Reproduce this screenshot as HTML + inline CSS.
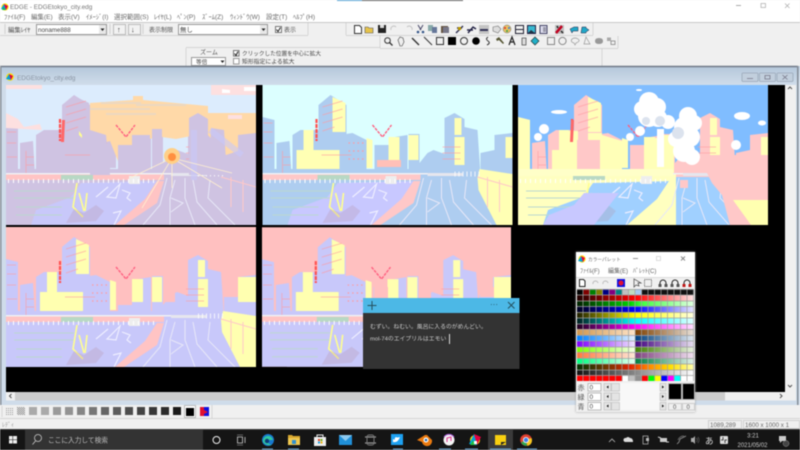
<!DOCTYPE html>
<html lang="ja"><head><meta charset="utf-8"><title>EDGE</title>
<style>
html,body{margin:0;padding:0;width:800px;height:450px;overflow:hidden;background:#f0f0f0}
#w{position:absolute;left:0;top:0;width:800px;height:450px;overflow:hidden;filter:blur(.42px)}
svg{position:absolute;left:0;top:0}
svg svg{position:static}
text{font-family:"Liberation Sans","Noto Sans CJK JP",sans-serif;font-size:7.5px;fill:#555}
.m text{font-size:6.5px;fill:#6a6a6a}
.pal{position:absolute;left:576px;top:252px;width:119px;height:160px;background:#f0f0f0;box-shadow:0 0 2px #999}
.r{position:absolute;left:1px;width:117px;height:5.75px}
.grid{position:absolute;left:1px;top:37px;width:117px;height:92px;background:repeating-linear-gradient(90deg,transparent 0 5.5px,rgba(160,160,160,.75) 5.5px 6.5px),repeating-linear-gradient(0deg,transparent 0 4.75px,rgba(160,160,160,.75) 4.75px 5.75px)}
</style></head><body><div id="w">
<svg width="800" height="450" viewBox="0 0 800 450">
<defs>
<linearGradient id="tb" x1="0" y1="0" x2="0" y2="1"><stop offset="0" stop-color="#b4c7da"/><stop offset="1" stop-color="#cfdcea"/></linearGradient>
<pattern id="p1" width="2" height="2" patternUnits="userSpaceOnUse"><rect width="1" height="1" fill="#999"/></pattern>
<pattern id="p2" width="2" height="2" patternUnits="userSpaceOnUse"><rect width="1" height="1" fill="#888"/><rect x="1" y="1" width="1" height="1" fill="#888"/></pattern>
<symbol id="scene" viewBox="0 0 250 140">
<rect width="250" height="140" style="fill:var(--sky)"/>
<g style="fill:var(--b)">
<path d="M0 32l12 3v55H0zM14 58l13-2 2 34H14zM30 50l8-5h22v45H30zM56 20l12-10 16 10v70H56zM77 50l13-2 14 7v35H77zM112 60h18v30h-18zM126 53l19-3v40h-19zM146 49h11v41h-11zM157 78l8-10 6-3 11 4v21h-25zM182 33l10-5 10 6v8l13 3 3 45h-36zM218 68l14-3v-15l18-2v42h-32z"/>
<rect y="84" width="250" height="8"/>
</g>
<g style="fill:var(--l)">
<path d="M70 12l13 6v29H70zM41 45h10v20l26 0v19H34V65h7zM104 53l6 2v28h-6zM126 52h11v23h-11zM146 50h10v25h-10zM192 33h7v17h-7zM192 52h10v28h-10zM243 52h7v21h-7z"/>
</g>
<rect x="0" y="92" width="250" height="48" style="fill:var(--g)"/>
<path d="M25 140l5-15 35-13 10-14 81-2-40 44z" style="fill:var(--a)"/>
<path d="M158 92h90v48H158z" style="fill:var(--r)"/>
<path d="M217 84l33 5v51h-16l-18-35-1-12z" style="fill:var(--l)"/>
<path d="M215 92l35 10M225 92v30M237 95v32" stroke="#ffc8c8" fill="none" stroke-width="1"/>
<path d="M151 96h7l-7 22-33 22h-9l30-26z" style="fill:var(--s)"/>
<rect y="88" width="158" height="7" style="fill:var(--s)"/>
<rect y="88" width="165" height="1.500" fill="#f0f0f4"/>
<rect x="165" y="88" width="35" height="3" fill="#e6e6ee"/>
<rect x="55" y="90" width="32" height="5" fill="#b8d8c4"/>
<rect x="123" y="91" width="11" height="8" fill="#eee"/>
<path d="M2 96h150" stroke="#fff" stroke-width="4" stroke-dasharray="1 4" fill="none"/>
<path d="M192 89h26" stroke="#fff" stroke-width="5" stroke-dasharray="1 3" fill="none" opacity=".8"/>
<path d="M161 93l-7 27-17 20M169 95l-5 18v27M179 93v20l10 27M187 95l4 22 20 23M204 95l-2 18 27 27M165 113l12 5-12 9" fill="none" stroke="#e8e8f8" stroke-width="1"/>
<path d="M101 112l13-13-4 14zM116 105l8 3-3 5 4 3M107 128l8-2-3 6-4 8M90 112l12-10" fill="none" stroke="#eef" stroke-width="1.200"/>
<path d="M8 106h60M8 113h60M10 122h46M10 130h46" stroke="#bcd8d0" stroke-width="1" fill="none"/>
<path d="M71 98l-4 24 10 10M73 108l5 18M81 108l-2 18" stroke="#ffff90" stroke-width="1.600" fill="none"/>
<path d="M60 138l8-14 10 4 12-8 8 6-8 10z" fill="#b48ca0" opacity=".25"/>
<path d="M110 40l10 12 9-12" stroke="#ff6080" stroke-width="1.400" fill="none" stroke-dasharray="3 1"/>
<path d="M54 34v22" stroke="#ff5050" stroke-width="2.200" fill="none" stroke-dasharray="4 1"/>
<path d="M60 22l20-6M60 30l20-6M60 38l20-6M60 46l12-4M1 38h9M1 47h9M1 58h9M1 72h10M59 70h30M180 62h18M180 68h18M180 74h18M20 66v22M20 72h8M20 80h8" stroke="#ff9aa0" stroke-width="1" fill="none" opacity=".6"/>
<path d="M86 58h16M86 66h16M86 74h16" stroke="#ff9aa0" stroke-width="1.200" stroke-dasharray="1.500 3" fill="none"/>
</symbol>
</defs>

<!-- title -->
<rect width="800" height="23" fill="#fff"/>
<rect x="337" width="25" height="1" fill="#5aa7d8"/><rect x="362" width="101" height="1" fill="#666"/>
<g><circle cx="5" cy="7" r="3.600" fill="#ffe000"/><path d="M1 9l3-5 2 6z" fill="#00a0e0"/><path d="M4 4l4 2-2 4z" fill="#e00040"/><path d="M2 10l3 0-1-3z" fill="#20c040"/></g>
<text x="10" y="9" style="font-size:6.400px;fill:#777">EDGE - EDGEtokyo_city.edg</text>
<path d="M736 5.500h5" stroke="#aaa"/><rect x="761" y="3.500" width="4.500" height="4" fill="none" stroke="#aaa" stroke-width=".7"/><path d="M785 3.500l4.500 4.500m0-4.500l-4.500 4.500" stroke="#aaa" stroke-width=".7"/>
<g class="m"><text x="4" y="19">ﾌｧｲﾙ(F)</text><text x="31" y="19">編集(E)</text><text x="58" y="19">表示(V)</text><text x="86" y="19">ｲﾒｰｼﾞ(I)</text><text x="114" y="19">選択範囲(S)</text><text x="154" y="19">ﾚｲﾔ(L)</text><text x="177" y="19">ﾍﾟﾝ(P)</text><text x="202" y="19">ｽﾞｰﾑ(Z)</text><text x="230" y="19">ｳｨﾝﾄﾞｳ(W)</text><text x="266" y="19">設定(T)</text><text x="293" y="19">ﾍﾙﾌﾟ(H)</text></g>

<!-- toolbars -->
<rect y="22" width="800" height="45" fill="#f0f0f0"/><path d="M0 22.500h800" stroke="#c8c8c8"/>
<path d="M0 35.500h308M308 23v12M346 23v12M346 35.500h247M593 23v12M380 36v12M380 48.500h238M618 36v12M186 47.500h194M186 48v18M602 48v18" stroke="#d4d4d4" fill="none"/>
<path d="M5 24v10M143 24v10M110 24v10" stroke="#d0d0d0"/>
<text x="8" y="32" style="font-size:6.400px">編集ﾚｲﾔ</text>
<rect x="36.500" y="24.500" width="70" height="10" fill="#fff" stroke="#999"/><text x="38" y="32" style="font-size:6.200px;fill:#444">noname888</text>
<rect x="99" y="25" width="7" height="9" fill="#e8e8e8"/><path d="M100.500 28.500h4l-2 2.500z" fill="#222"/>
<rect x="113.500" y="24.500" width="12" height="10" fill="#f2f2f2" stroke="#bbb"/><text x="117" y="32" style="fill:#444">↑</text>
<rect x="128.500" y="24.500" width="12" height="10" fill="#f2f2f2" stroke="#bbb"/><text x="131" y="32" style="fill:#444">↓</text>
<text x="149" y="32" style="font-size:6px">表示制限</text>
<rect x="178.500" y="24.500" width="89" height="10" fill="#fff" stroke="#999"/><text x="180" y="32" style="font-size:6.400px;fill:#444">無し</text>
<rect x="260" y="25" width="7" height="9" fill="#e8e8e8"/><path d="M261.500 28.500h4l-2 2.500z" fill="#222"/>
<rect x="275.500" y="26.500" width="6" height="6" fill="#fff" stroke="#777"/><path d="M276.500 29.500l1.500 2 2.500-4" stroke="#222" fill="none"/><text x="284" y="32" style="font-size:6px">表示</text>

<g class="i">
<path d="M354.500 25.500h5l2 2v6h-7z" fill="#fff" stroke="#333"/>
<path d="M365 27h3l1 1h4v5h-8z" fill="#e6c34a" stroke="#555" stroke-width=".6"/>
<rect x="378" y="25" width="8" height="8" fill="#222"/><rect x="380" y="25" width="4" height="3" fill="#ddd"/>
<path d="M391 30a3 3 0 0 1 5-3M407 27a3 3 0 0 1 5 3" stroke="#c4c4c4" fill="none"/>
<path d="M418 25l3 5M423 25l-3 5" stroke="#446"/><circle cx="418" cy="32" r="1.300" fill="#358"/><circle cx="423" cy="32" r="1.300" fill="#358"/>
<rect x="428" y="25" width="5" height="6" fill="#8aa"/><rect x="432" y="27" width="5" height="6" fill="#679"/>
<rect x="441" y="26" width="7" height="7" fill="#654"/><rect x="443" y="27" width="6" height="6" fill="#778"/>
<path d="M456 33l7-7M457 28h5" stroke="#335" stroke-width="1.500"/><rect x="458" y="27" width="3" height="3" fill="#b90"/>
<path d="M468 33l5-6 3 2M467 30h6" stroke="#224" stroke-width="1.400" fill="none"/>
<rect x="479" y="25" width="10" height="9" fill="#c4c4c4"/><rect x="480" y="29" width="8" height="2" fill="#335"/>
<path d="M493 27l5-1 3 3-3 4-5-2z" fill="#ddd" stroke="#777" stroke-width=".6"/>
<circle cx="507" cy="29" r="4" fill="#e8c060" stroke="#777" stroke-width=".5"/><circle cx="505" cy="28" r="1" fill="#e03030"/><circle cx="509" cy="28" r="1" fill="#3080e0"/><circle cx="507" cy="31" r="1" fill="#30a050"/>
<path d="M515.500 25.500h8v8h-8zM515.500 29.500h8" stroke="#223" fill="none"/>
<rect x="527.500" y="25.500" width="8" height="8" fill="#38b8d0" stroke="#224"/><path d="M528 33l3-3 4 3z" fill="#234"/>
<rect x="540" y="25.500" width="7" height="8" fill="#dde" stroke="#446"/><rect x="543" y="27" width="3" height="5" fill="#99a"/>
<rect x="555" y="25" width="9" height="9" fill="#c0c0c0"/><path d="M556 33l6-7" stroke="#c00020" stroke-width="2.500"/><path d="M557 26l1 2M561 31l2 2" stroke="#222" stroke-width="1.500"/>
<path d="M570 29l4-2h4v4h-5l-1 2z" fill="#20a8c8" stroke="#224" stroke-width=".5"/><path d="M582 27h4v1l3 2-3 2v1h-5z" fill="#20a8c8" stroke="#224" stroke-width=".5"/>

<circle cx="387.500" cy="40.500" r="2.800" fill="none" stroke="#333"/><path d="M389.500 42.500l3 3" stroke="#333" stroke-width="1.300"/>
<path d="M398 40l2-3 3 1 1 4-2 4h-2z" fill="#eee" stroke="#444" stroke-width=".6"/>
<path d="M412 38l7 7" stroke="#333" stroke-width="1.400"/><path d="M424 37l8 8" stroke="#333"/>
<rect x="436.500" y="37.500" width="7" height="7" fill="none" stroke="#333"/><rect x="448" y="37" width="8" height="8" fill="#000"/>
<circle cx="464" cy="41" r="3.500" fill="none" stroke="#333"/><circle cx="476" cy="41" r="3.800" fill="#000"/>
<path d="M488 37q-3 2 0 4t-1 4" fill="none" stroke="#333"/>
<path d="M496 39l3-2 5 6-1 1-4-4-2 1z" fill="#553"/>
<path d="M509 45l3-8 3 8M510 42h4" stroke="#222" stroke-width="1.200" fill="none"/>
<rect x="522" y="38" width="4" height="7" fill="#ddd" stroke="#444" stroke-width=".7"/>
<path d="M535 37l4 4-4 4-4-4z" fill="#20b0c8" stroke="#233" stroke-width=".7"/>
<rect x="547.500" y="37.500" width="7" height="7" fill="none" stroke="#888"/><circle cx="562.500" cy="41" r="3.600" fill="none" stroke="#888"/>
<path d="M572 39q3-2 6 0t-2 4l-1 2-1-2q-4-1-2-4z" fill="none" stroke="#999" stroke-width=".7"/>
<path d="M584 44l2-7 4 7z" fill="none" stroke="#999" stroke-width=".7"/>
<path d="M595 41q0-3 4-3t4 3-4 3-4-3z" fill="#999"/>
<rect x="607" y="37.500" width="4" height="3.500" fill="#aaa"/><rect x="611" y="41" width="4" height="3.500" fill="none" stroke="#777" stroke-width=".7"/>
</g>

<text x="200" y="54.500" style="font-size:6px">ズーム</text>
<rect x="191.500" y="57.500" width="34" height="8" fill="#fff" stroke="#999"/><text x="196" y="64" style="font-size:5.600px;fill:#444">等倍</text><path d="M220.500 60.500h4l-2 2.500z" fill="#222"/>
<rect x="233.500" y="50.500" width="5.500" height="5.500" fill="#fff" stroke="#777"/><path d="M234.500 53.500l1.500 2 2-4" stroke="#222" fill="none"/>
<text x="242" y="55.500" style="font-size:5.650px;fill:#444">クリックした位置を中心に拡大</text>
<rect x="233.500" y="58.500" width="5.500" height="5.500" fill="#fff" stroke="#999"/>
<text x="242" y="63.500" style="font-size:5.850px;fill:#444">矩形指定による拡大</text>

<!-- MDI window -->
<rect x="0" y="66" width="800" height="339" fill="#cfdcea"/>
<rect x="0" y="66" width="800" height="18" fill="url(#tb)"/>
<path d="M0 66.500h798" stroke="#707a88" stroke-width="1.400"/>
<rect x="0" y="66" width="1.500" height="340" fill="#868e98"/><rect x="797" y="66" width="1.500" height="340" fill="#868e98"/>
<circle cx="10" cy="77" r="3.800" fill="#ffe000"/><path d="M6 79l3-5 2 6z" fill="#00a0e0"/><path d="M9 74l4 2-2 4z" fill="#e00040"/>
<text x="17" y="80" style="font-size:6.400px;fill:#8a95a3">EDGEtokyo_city.edg</text>
<g fill="#c2cfdd" stroke="#9aa8b8" stroke-width=".8"><rect x="742" y="73" width="16" height="8.500" rx="1"/><rect x="759.500" y="73" width="16" height="8.500" rx="1"/><rect x="777" y="73" width="16" height="8.500" rx="1"/></g>
<path d="M747 78.500h6M765 75.500h5v3.500h-5zM782.500 75l5 4.500m0-4.500l-5 4.500" stroke="#778" fill="none" stroke-width=".8"/>
<rect x="6" y="85" width="779" height="307" fill="#000"/>
<rect x="785" y="85" width="11" height="307" fill="#f0f0f0"/><path d="M788 89l2-2 2 2M788 385l2 2 2-2" stroke="#555" fill="none"/>
<rect x="6" y="392" width="790" height="8.500" fill="#f0f0f0"/><rect x="15" y="392" width="710" height="8.500" fill="#cdcdcd"/><path d="M11.500 394l-2 2 2 2M780 394l2 2-2 2" stroke="#555" fill="none"/>

<svg x="6" y="85" width="250" height="140" style="--sky:#dcecfd;--b:#cfc3e2;--l:#cfc3e2;--g:#cfc3e2;--a:#c8c8fa;--r:#cfc3e2;--s:#ffc4c4">
<use href="#scene"/>
<path d="M84 18l43-3v-4h10v4l65 6v7h48v32l-30 10-20-22-30 6-14-2-14 2v20l-30 2-8-20-20 6z" fill="#ffd9a8"/>
<path d="M84 24h60M100 29h50M130 20h50M95 18h40" stroke="#ecd8c0" stroke-width="2" fill="none"/>
<path d="M146 44l10 0v24h-10zM126 50h18v30h-18zM112 60h14v25h-14zM183 33l9-5 10 6v56h-19zM205 43l13 2 3 45h-18zM232 50l18-2v42h-18zM100 50l-16-5v45h20z" fill="#cfc3e2"/>
<path d="M188 45v50M204 45l32 25" stroke="#c8c8fa" stroke-width="6" fill="none" opacity=".6"/>
<path d="M166 73l-42 20M166 73l50 30M166 73l60 15M166 73v30M166 73l-30 50" stroke="#fff0d0" stroke-width=".8" fill="none"/>
<path d="M0 0h36v4H0zM205 0h45v10h-45zM0 28l12 6 6 8 16-3 2 6-36-2zM222 30h14v4h-14z" fill="#fde0e0"/>
<path d="M216 4l8 1v3h-8zM238 2h12v4h-12z" fill="#fff"/>
<path d="M56 35h3l-1 22h-3z" fill="#ff6868"/>
<path d="M73 46l3 4 0 3-3-3z" fill="#ffff90"/>
<path d="M110 40l10 12 9-12" stroke="#ff6080" stroke-width="1.400" fill="none" stroke-dasharray="3 1"/>
<circle cx="166" cy="71" r="8" fill="#ffd088"/><circle cx="166" cy="72" r="4" fill="#ff9040"/>
</svg>

<svg x="262" y="85" width="251" height="140" style="--sky:#dcffff;--b:#aecdf0;--l:#ffffb4;--g:#aecdf0;--a:#c8c8ff;--r:#aecdf0;--s:#ffc8c8">
<use href="#scene"/><rect x="115" y="75" width="24" height="7" fill="#ffc0b8"/>
</svg>

<svg x="518" y="85" width="250" height="140" style="--sky:#80bdff;--b:#ffc8c8;--l:#ffffb8;--g:#ffffc0;--a:#a0d0ff;--r:#a0d0ff;--s:#ffffc0">
<use href="#scene"/>
<path d="M25 140l6-10 25-10 10-12 35 0-25 32z" fill="#c8c8ff"/>
<path d="M0 32l12 3v55H0zM43 46h17v44H43zM70 48h14v42H70zM84 50l20 6v34H84zM126 53h30v35h-30z" fill="#ffffb8"/>
<path d="M59 55h23v30H59z" fill="#ffc8c8"/>
<path d="M180 70h70v70h-38l-8-30-10-12z" fill="#ffc8c8"/><path d="M215 115l35 0v25h-17z" fill="#ffffb0"/>
<path d="M112 60h14v25h-14z" fill="#ffc8c8"/>
<rect x="0" y="84" width="155" height="7" fill="#ffffc8"/>
<g fill="#fff"><circle cx="131" cy="17" r="10"/><circle cx="124" cy="24" r="8"/><circle cx="139" cy="22" r="9"/><circle cx="131" cy="31" r="11"/><circle cx="140" cy="33" r="9"/><circle cx="150" cy="37" r="7"/><circle cx="170" cy="31" r="9"/><circle cx="176" cy="38" r="8"/><circle cx="166" cy="42" r="10"/><circle cx="172" cy="52" r="10"/><circle cx="166" cy="66" r="11"/><circle cx="174" cy="72" r="8"/><circle cx="158" cy="54" r="8"/><circle cx="122" cy="46" r="5"/><circle cx="112" cy="52" r="4"/><circle cx="26" cy="44" r="5"/><circle cx="20" cy="52" r="4"/><ellipse cx="41" cy="27" rx="8" ry="2"/><ellipse cx="224" cy="31" rx="8" ry="4"/><ellipse cx="244" cy="38" rx="4" ry="2.500"/><ellipse cx="121" cy="5" rx="3" ry="1"/><circle cx="218" cy="60" r="5"/><rect x="139" y="44" width="7" height="38"/></g>
<g fill="#dce3ee"><circle cx="142" cy="36" r="5"/><circle cx="160" cy="48" r="6"/><circle cx="128" cy="36" r="4"/></g>
<path d="M162 95h8v8h-8z" fill="#ffc8c8"/><path d="M53 35h3l-1 22h-3z" fill="#ff6868"/>
</svg>

<svg x="6" y="227" width="250" height="140" style="--sky:#ffc0c0;--b:#c8c8fa;--l:#ffffb0;--g:#c8c8fa;--a:#c8c8fa;--r:#c8c8fa;--s:#ffc4c4">
<use href="#scene"/><path d="M112 60h14v18h-14zM157 60h12v15h-12z" fill="#ffc0c0"/><path d="M218 60h14v10h-14z" fill="#ffc0c0"/><path d="M232 50h18v25h-18z" fill="#ffffb0"/>
</svg>

<svg x="262" y="227" width="249" height="140" style="--sky:#ffc0c0;--b:#c8c8fa;--l:#ffffb0;--g:#c8c8fa;--a:#c8c8fa;--r:#c8c8fa;--s:#ffc4c4">
<use href="#scene"/><path d="M112 60h14v18h-14zM157 60h12v15h-12z" fill="#ffc0c0"/><path d="M218 60h14v10h-14z" fill="#ffc0c0"/><path d="M232 50h18v25h-18z" fill="#ffffb0"/>
</svg>

<!-- pattern bar -->
<rect y="405" width="800" height="13" fill="#f0f0f0"/><path d="M0 418.500h800M212 405v13M2 406v11" stroke="#d4d4d4"/>
<g>
<rect x="5" y="407" width="8" height="8" fill="url(#p1)"/><rect x="17" y="407" width="8" height="8" fill="url(#p2)"/><rect x="29" y="407" width="8" height="8" fill="#aaa"/><rect x="41" y="407" width="8" height="8" fill="#aaa"/><rect x="53" y="407" width="8" height="8" fill="#9a9a9a"/><rect x="65" y="407" width="8" height="8" fill="#939393"/><rect x="77" y="407" width="8" height="8" fill="#858585"/><rect x="89" y="407" width="8" height="8" fill="#777"/><rect x="101" y="407" width="8" height="8" fill="#666"/><rect x="113" y="407" width="8" height="8" fill="#5c5c5c"/><rect x="125" y="407" width="8" height="8" fill="#4e4e4e"/><rect x="137" y="407" width="8" height="8" fill="#444"/><rect x="149" y="407" width="8" height="8" fill="#383838"/><rect x="161" y="407" width="8" height="8" fill="#2c2c2c"/><rect x="173" y="407" width="8" height="8" fill="#1a1a1a"/>
<rect x="184.500" y="405.500" width="11" height="12" fill="#fff" stroke="#bbb"/><rect x="186" y="408" width="8" height="8" fill="#000"/>
<rect x="200" y="407" width="9" height="9" fill="#1010e0"/><path d="M200 407h4v9h-4zM204 410l4 2-4 2z" fill="#e01030"/>
</g>

<!-- status -->
<rect y="419" width="800" height="10" fill="#f0f0f0"/>
<text x="2" y="427" style="font-size:6px;fill:#999">ﾚﾃﾞｨ</text>
<rect x="708.500" y="420.500" width="33" height="8" fill="#f0f0f0" stroke="#d0d0d0"/><rect x="743.500" y="420.500" width="56" height="8" fill="#f0f0f0" stroke="#d0d0d0"/>
<text x="710" y="427" style="font-size:6.200px;fill:#666">1089,289</text><text x="745" y="427" style="font-size:6.200px;fill:#666">1600 x 1000 x 1</text>

<!-- taskbar -->
<rect y="429" width="800" height="21" fill="#151515"/><rect y="429" width="800" height="1" fill="#3a3a3a"/>
<rect x="9" y="436" width="3.500" height="3.500" fill="#eee"/><rect x="13" y="436" width="4" height="3.500" fill="#eee"/><rect x="9" y="440" width="3.500" height="3.500" fill="#eee"/><rect x="13" y="440" width="4" height="3.500" fill="#eee"/>
<rect x="25" y="430" width="178" height="20" fill="#333"/>
<circle cx="38" cy="438" r="3.500" fill="none" stroke="#ccc" stroke-width=".8"/><path d="M35.500 441l-3 3.500" stroke="#ccc" stroke-width=".8"/>
<text x="48" y="442.500" style="font-size:6.700px;fill:#bbb">ここに入力して検索</text>
<circle cx="216.500" cy="440" r="3.500" fill="none" stroke="#eee" stroke-width="1"/>
<path d="M237.500 437h5v6h-5zM245 437v6" stroke="#ccc" fill="none" stroke-width=".8"/><path d="M237 435h6M237 445h6" stroke="#aaa" stroke-width=".5"/>
<circle cx="268" cy="440" r="6" fill="#1878d0"/><path d="M263 442a5 5 0 0 1 10-2h-5q-1 4 4 5-6 1-9-3z" fill="#30c8a0"/><circle cx="267" cy="441" r="2.200" fill="#0c3c78"/>
<path d="M288 435h4l1 1h7v2h-12z" fill="#d8a830"/><rect x="288" y="438" width="12" height="7" fill="#f0c850"/><rect x="292" y="440" width="4" height="4" fill="#3090d0"/>
<rect x="314" y="437" width="12" height="9" fill="#eee"/><path d="M317 437v-2h6v2" fill="none" stroke="#eee"/><rect x="318" y="439" width="2" height="2" fill="#e04020"/><rect x="320.500" y="439" width="2" height="2" fill="#70b020"/><rect x="318" y="441.500" width="2" height="2" fill="#20a0e0"/><rect x="320.500" y="441.500" width="2" height="2" fill="#f0b010"/>
<rect x="339" y="435" width="13" height="10" fill="#2090d8"/><path d="M339 435l6.500 6 6.500-6" fill="#8ccaf0"/>
<path d="M365 437h11M365 443h11" stroke="#999" stroke-width="1.200"/><rect x="367" y="435" width="7" height="10" rx="2" fill="none" stroke="#777"/>
<rect x="391" y="434" width="12" height="11" fill="#1da1f2"/><path d="M393 442q5 1 7-5-3 1-4 0-2 1-1 3l-2-1z" fill="#fff"/>
<path d="M417 440l8-5h2l5 5a5 5 0 0 1-10 2z" fill="#ea7a10"/><circle cx="426" cy="440" r="2.500" fill="#fff"/><circle cx="426" cy="440" r="1.300" fill="#2a6cb0"/>
<circle cx="449" cy="440" r="5.500" fill="#f4f4f4"/><path d="M447 442v-4l4-1v4" stroke="#e0308c" fill="none"/><path d="M444 437a6 6 0 0 1 10 0" stroke="#b060e0" fill="none"/>
<g><circle cx="475" cy="440" r="5" fill="#ffe000"/><path d="M469 444l5-10 3 11z" fill="#00a0e0"/><path d="M474 434l7 3-4 8z" fill="#e00040"/><path d="M470 445l5 0-2-5z" fill="#20c040"/><rect x="474" y="441" width="3" height="3" fill="#fff"/></g>
<rect x="488" y="429" width="25" height="21" fill="#3a3a3a"/><rect x="495" y="435" width="11" height="10" fill="#f8d010"/><path d="M501 445v-3h5z" fill="#222"/>
<circle cx="526" cy="440" r="5.800" fill="#e04030"/><path d="M526 440l-5 2.500a5.800 5.800 0 0 0 6 3.300z" fill="#30a850"/><path d="M526 440l5.500-2a5.800 5.800 0 0 1-4 8z" fill="#f8c820"/><circle cx="526" cy="440" r="2.600" fill="#4080e8" stroke="#fff" stroke-width=".8"/>
<path d="M262 449h11M288 449h11M393 449h10M439 449h12M465 449h13M490 449h21M517 449h20" stroke="#6aa8d8"/>
<path d="M609 442l3-3 3 3" stroke="#bbb" fill="none" stroke-width=".8"/>
<path d="M625 442a2 2 0 0 1 1-4q2-2 4 0 3 0 3 4z" fill="#ddd"/>
<rect x="643" y="436" width="5" height="8" fill="none" stroke="#bbb" stroke-width=".7"/><rect x="646" y="438" width="3" height="3" fill="#bbb"/>
<rect x="660" y="438" width="7" height="4" fill="#ccc"/><path d="M658 437l3 1M666 442h3" stroke="#ccc"/>
<path d="M677 444l2-2 1-3 4-2 2-1" stroke="#999" fill="none" stroke-width=".8"/><path d="M678 440a6 6 0 0 1 6-4" stroke="#666" fill="none"/>
<path d="M691 438h2l2-2v8l-2-2h-2z" fill="#aaa"/><path d="M696.500 438a3 3 0 0 1 0 4M698 437a5 5 0 0 1 0 6" stroke="#777" fill="none" stroke-width=".6"/>
<text x="705" y="444" style="font-size:8.500px;fill:#ddd">あ</text>
<rect x="720" y="436" width="8" height="8" rx="1" fill="#ddd"/><path d="M723 437v3h-2M725 443v-3h2" stroke="#222" fill="none" stroke-width=".8"/>
<text x="753" y="437.500" text-anchor="middle" style="font-size:6px;fill:#ccc">3:21</text>
<text x="752.500" y="447" text-anchor="middle" style="font-size:6px;fill:#ccc">2021/05/02</text>
<path d="M779 436h7v5h-4l-2 2v-2h-1z" fill="#ccc"/><circle cx="786" cy="443.500" r="3" fill="#444" stroke="#aaa" stroke-width=".4"/>

<!-- sticky -->
<rect x="363" y="298" width="156.500" height="71" fill="#333"/>
<rect x="363" y="298" width="156.500" height="15" fill="#4cb8e6"/>
<path d="M367.500 305.500h9M372 301v9M508 302l6.500 6.500m0-6.500l-6.500 6.500" stroke="#24505f" fill="none"/>
<text x="490" y="307" style="font-size:8px;fill:#24505f">···</text>
<text x="370" y="328.500" style="font-size:5.850px;fill:#ccc">むずい。ねむい。風呂に入るのがめんどい。</text>
<text x="370" y="340.500" style="font-size:5.850px;fill:#ccc">mol-74のエイプリルはエモい</text>
<path d="M449.500 334v10" stroke="#ddd"/>
</svg>

<div class="pal">
<svg width="119" height="37" viewBox="0 0 119 37" style="left:0;top:0">
<rect width="119" height="37" fill="#fff"/><rect y="26" width="119" height="11" fill="#f0f0f0"/>
<circle cx="6" cy="7" r="3.600" fill="#ffe000"/><path d="M2 9l3-5 2 6z" fill="#00a0e0"/><path d="M5 4l4 2-2 4z" fill="#e00040"/>
<text x="12" y="9" style="font-size:4.700px;fill:#666">カラーパレット</text>
<path d="M57 6.500h5" stroke="#999"/><rect x="80.500" y="4.500" width="4" height="4" fill="none" stroke="#ddd"/><path d="M105 4.500l4 4m0-4l-4 4" stroke="#888"/>
<text x="4" y="21" style="font-size:6px;fill:#666">ﾌｧｲﾙ(F)</text><text x="32" y="21" style="font-size:6px;fill:#666">編集(E)</text><text x="57" y="21" style="font-size:6px;fill:#666">ﾊﾟﾚｯﾄ(C)</text>
<path d="M3.500 27.500h4l1.500 1.500v5.500H3.500z" fill="#fff" stroke="#222"/>
<path d="M17 32a2.500 2.500 0 0 1 5-1M27 32a2.500 2.500 0 0 1 5-1" stroke="#bbb" fill="none"/>
<rect x="41" y="27" width="8" height="8" fill="#1010e0"/><circle cx="45" cy="31" r="2.500" fill="#e01030"/>
<path d="M58 27v8l2-2 3 1-1-3h3z" fill="#eee" stroke="#444" stroke-width=".7"/>
<rect x="68.500" y="27.500" width="7" height="7" fill="none" stroke="#555" stroke-dasharray="1 1"/>
<path d="M84 34v-3a3 3 0 0 1 6 0v3M96 34v-3a3 3 0 0 1 6 0v3M108 34v-3a3 3 0 0 1 6 0v3" stroke="#222" fill="none"/><path d="M82.500 32h3v3h-3zM88.500 32h3v3h-3zM94.500 32h3v3h-3zM100.500 32h3v3h-3z" fill="#555"/><path d="M106.500 32h3v3h-3zM112.500 32h3v3h-3z" fill="#c01818"/>
<path d="M0 25.500h119" stroke="#ddd"/>
</svg>
<div class="r" style="top:37px;background:linear-gradient(90deg,#000 0 5.500%,#800000 5.500% 11%,#008000 11% 16.600%,#808000 16.600% 22%,#000080 22% 27.700%,#800080 27.700% 33%,#008080 33% 38.800%,#c0c0c0 38.800% 44%,#c0dcc0 44% 50%,#a6caf0 50% 55.500%,#111 55.500% 100%)"></div>
<div class="r" style="top:42.750px;background:linear-gradient(90deg,#200000,#ff0000 50%,#ffe4e4)"></div>
<div class="r" style="top:48.500px;background:linear-gradient(90deg,#002000,#00d000 45%,#40ff40 55%,#e0ffe0)"></div>
<div class="r" style="top:54.250px;background:linear-gradient(90deg,#000020,#0000ff 50%,#e4e4ff)"></div>
<div class="r" style="top:60px;background:linear-gradient(90deg,#202000,#ffff00 50%,#ffffe0)"></div>
<div class="r" style="top:65.750px;background:linear-gradient(90deg,#002020,#00ffff 50%,#e0ffff)"></div>
<div class="r" style="top:71.500px;background:linear-gradient(90deg,#200020,#ff00ff 50%,#ffe0ff)"></div>
<div class="r" style="top:77.250px;background:linear-gradient(90deg,#d09850,#ffe4c8 50%,#804000 50%,#e8e0d8)"></div>
<div class="r" style="top:83px;background:linear-gradient(90deg,#0080ff,#e4f0ff 50%,#004080 50%,#e0e8f0)"></div>
<div class="r" style="top:88.750px;background:linear-gradient(90deg,#8000ff,#f0e4ff 50%,#400080 50%,#e8e0f0)"></div>
<div class="r" style="top:94.500px;background:linear-gradient(90deg,#80ff00,#f4ffe4 50%,#408000 50%,#e8f0e0)"></div>
<div class="r" style="top:100.250px;background:linear-gradient(90deg,#ff7840,#ffe8d8 50%,#804080 50%,#f0e0f0)"></div>
<div class="r" style="top:106px;background:linear-gradient(90deg,#00ff80,#e4fff0 50%,#008040 50%,#e0f0e8)"></div>
<div class="r" style="top:111.750px;background:linear-gradient(90deg,#003000,#703800 25%,#e02000 45%,#ff8000 60%,#ffe000 80%,#ffffb0)"></div>
<div class="r" style="top:117.500px;background:linear-gradient(90deg,#111,#888 50%,#fff)"></div>
<div class="r" style="top:123.250px;background:linear-gradient(90deg,#ff0000 0 38.800%,#fff 38.800% 44%,#c0c0c0 44% 50%,#909090 50% 55.500%,#ff0000 55.500% 61%,#00ff00 61% 66.600%,#ffff00 66.600% 72%,#0000ff 72% 77.700%,#ff00ff 77.700% 83.300%,#00ffff 83.300% 89%,#fff 89% 100%)"></div>
<div class="grid"></div>
<svg width="119" height="31" viewBox="0 0 119 31" style="left:0;top:129px">
<rect width="119" height="31" fill="#f0f0f0"/><rect x="43" y="2" width="41" height="27" fill="#f8f8f8"/>
<text x="1.500" y="9" style="font-size:7px;fill:#555">赤</text><text x="1.500" y="18.500" style="font-size:7px;fill:#555">緑</text><text x="1.500" y="28" style="font-size:7px;fill:#555">青</text>
<g fill="#fff" stroke="#bbb"><rect x="12" y="2.500" width="13" height="7.500"/><rect x="12" y="12" width="13" height="7.500"/><rect x="12" y="21.500" width="13" height="7.500"/></g>
<text x="13.500" y="8.500" style="font-size:6.500px;fill:#444">0</text><text x="13.500" y="18" style="font-size:6.500px;fill:#444">0</text><text x="13.500" y="27.500" style="font-size:6.500px;fill:#444">0</text>
<g fill="#e4e4e4" stroke="#bbb" stroke-width=".6"><rect x="28" y="2.500" width="7" height="7.500"/><rect x="35.500" y="2.500" width="8" height="7.500"/><rect x="28" y="12" width="7" height="7.500"/><rect x="35.500" y="12" width="8" height="7.500"/><rect x="28" y="21.500" width="7" height="7.500"/><rect x="35.500" y="21.500" width="8" height="7.500"/><rect x="84" y="2.500" width="6" height="7.500"/><rect x="84" y="12" width="6" height="7.500"/><rect x="84" y="21.500" width="6" height="7.500"/></g>
<path d="M32.500 4.500v3l-2-1.500zM32.500 14v3l-2-1.500zM32.500 23.500v3l-2-1.500zM86 4.500v3l2-1.500zM86 14v3l2-1.500zM86 23.500v3l2-1.500z" fill="#111"/>
<rect x="92.500" y="2.500" width="13" height="16" fill="#000" stroke="#bbb"/><rect x="106.500" y="2.500" width="12" height="16" fill="#000" stroke="#bbb"/>
<rect x="92.500" y="22.500" width="13" height="6.500" fill="#f0f0f0" stroke="#ccc"/><rect x="106.500" y="22.500" width="12" height="6.500" fill="#f0f0f0" stroke="#ccc"/>
<text x="97" y="28" style="font-size:6px;fill:#555">0</text><text x="110.500" y="28" style="font-size:6px;fill:#555">0</text>
</svg>
</div>
</div></body></html>
